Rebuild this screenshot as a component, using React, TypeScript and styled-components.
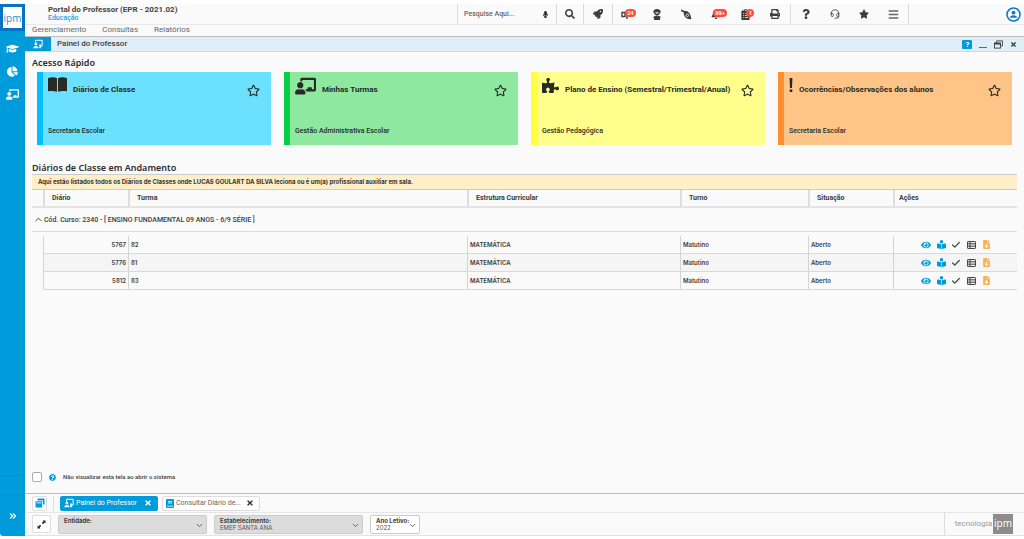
import React from "react";
import styled, { createGlobalStyle } from "styled-components";
import {
  FaBars, FaBell, FaBookReader, FaChalkboardTeacher, FaChartPie, FaClipboardList,
  FaEye, FaFileDownload, FaGraduationCap, FaMicrophone, FaPrint, FaPuzzlePiece,
  FaQuestion, FaQuestionCircle, FaRegStar, FaRocket, FaSearch, FaStar, FaTimes,
} from "react-icons/fa";
import { Check, ChevronDown, ChevronUp, ChevronsRight, Headset } from "lucide-react";

const GlobalStyle = createGlobalStyle`
  * { box-sizing: border-box; }
  body { margin: 0; background: #fff; color: #3c3c3c; font: 500 7px/10px Roboto, sans-serif; }
  button { border: 0; padding: 0; margin: 0; background: none; color: inherit; font: inherit; cursor: pointer; display: flex; align-items: center; justify-content: center; }
  a { color: inherit; text-decoration: none; }
  h1, h2, p { margin: 0; }
  svg { display: block; flex: none; }
`;

const Shell = styled.div`
  display: flex;
  min-height: 100vh;
  padding: 4px 0 3px;
`;
const Sidebar = styled.aside`
  flex: none;
  width: 25px;
  display: flex;
  flex-direction: column;
  background: #009bdb;
  color: #fff;
  border-bottom-left-radius: 3px;
`;
const Logo = styled.a`
  height: 27px;
  display: flex;
  align-items: center;
  justify-content: center;
  border: 3px solid #0873c4;
  background: #fff;
  color: #1a8fd6;
  font: 400 10px/14px "Open Sans", sans-serif;
`;
const SideNav = styled.nav`
  flex: 1;
  display: flex;
  flex-direction: column;
  padding-top: 6px;
`;
const SideButton = styled.button`
  height: 23px;
`;
const SideGap = styled.div`
  height: 20px;
  border-top: 1px solid #0b8fca;
`;
const SideFoot = styled.div`
  height: 41px;
  display: flex;
  justify-content: center;
  border-top: 1px solid #0b8fca;
`;
const Page = styled.div`
  flex: 1;
  min-width: 0;
  display: flex;
  flex-direction: column;
  background: #fafafa;
`;
const TopBar = styled.header`
  display: flex;
  height: 21px;
  border-bottom: 1px solid #e9e9e9;
`;
const Brand = styled.div`
  flex: 1;
  padding: 2px 0 0 23px;
`;
const BrandTitle = styled.h1`
  font: 700 8px/8px Roboto, sans-serif;
  color: #444;
`;
const BrandSub = styled.p`
  font: 500 7px/8px Roboto, sans-serif;
  color: #1a9fe0;
`;
const SearchBox = styled.label`
  display: flex;
  align-items: center;
  width: 99px;
  padding: 0 7px 0 6px;
  border-left: 1px solid #dcdcdc;
`;
const SearchInput = styled.input`
  flex: 1;
  min-width: 0;
  border: 0;
  padding: 0;
  outline: 0;
  background: none;
  font: 500 7px/10px Roboto, sans-serif;
  &::placeholder { color: #666; opacity: 1; }
`;
const ToolGroup = styled.div<{ $width: number }>`
  display: flex;
  width: ${(p) => p.$width}px;
  border-left: 1px solid #dcdcdc;
  color: #3b3f3b;
`;
const Tool = styled.button`
  flex: 1;
`;
const ToolIcon = styled.span`
  position: relative;
  display: block;
`;
const Badge = styled.span<{ $left: number }>`
  position: absolute;
  top: 0;
  left: ${(p) => p.$left}px;
  min-width: 8px;
  height: 8px;
  padding: 0 2px;
  border-radius: 4px;
  background: #f4503c;
  color: #fff;
  font: 700 5px/8px Inter, sans-serif;
`;
const Account = styled.div`
  width: 116px;
  display: flex;
  justify-content: flex-end;
  padding-right: 3px;
  border-left: 1px solid #dcdcdc;
  color: #0e7cc9;
`;
const MenuBar = styled.nav`
  display: flex;
  gap: 16px;
  height: 12px;
  padding: 0 7px;
  border-bottom: 1px solid #bdbdbd;
  color: #666;
  font: 400 8px/10px Roboto, sans-serif;
`;
const TitleBar = styled.div`
  display: flex;
  align-items: center;
  height: 15px;
  padding-right: 7px;
  border-bottom: 1px solid #cfd8dc;
  background: #e0eff7;
`;
const TitleIcon = styled.span`
  align-self: stretch;
  width: 26px;
  display: flex;
  align-items: center;
  justify-content: center;
  background: #009bdb;
  color: #fff;
`;
const Title = styled.span`
  flex: 1;
  padding-left: 6px;
  font: 500 8px/12px Roboto, sans-serif;
`;
const WindowTools = styled.div`
  display: flex;
  align-items: center;
  gap: 7px;
`;
const HelpButton = styled.button`
  width: 10px;
  height: 9px;
  border-radius: 1px;
  background: #009bdb;
  color: #fff;
`;
const Content = styled.main`
  flex: 1;
  padding: 5px 7px 0;
`;
const Heading = styled.h2<{ $top?: number }>`
  margin-top: ${(p) => p.$top ?? 0}px;
  font: 600 9px/12px "Noto Sans", sans-serif;
  color: #2c2c2c;
`;
const Cards = styled.div`
  display: grid;
  grid-template-columns: repeat(4, minmax(0, 1fr));
  gap: 13px;
  padding: 3px 5px 0;
`;
const Card = styled.article<{ $bg: string; $edge: string }>`
  display: flex;
  flex-direction: column;
  justify-content: space-between;
  height: 73px;
  padding: 5px 11px 9px 5px;
  border-left: 6px solid ${(p) => p.$edge};
  background: ${(p) => p.$bg};
  color: #262b26;
`;
const CardHead = styled.div`
  display: flex;
`;
const CardTitle = styled.a`
  flex: 1;
  min-width: 0;
  padding: 7px 0 0 6px;
  white-space: nowrap;
  font: 700 8px/12px Roboto, sans-serif;
`;
const StarButton = styled.button`
  height: 26px;
`;
const Notice = styled.p`
  height: 16px;
  padding: 0 6px;
  border: solid #ccc;
  border-width: 1px 0;
  background: #ffefc8;
  color: #333;
  font: 700 6px/14px Inter, sans-serif;
`;
const Table = styled.table`
  width: 100%;
  table-layout: fixed;
  border-collapse: separate;
  border-spacing: 0;
`;
const Col = styled.col<{ $w?: number }>`
  width: ${(p) => (p.$w ? `${p.$w}px` : "auto")};
`;
const HeadCell = styled.th`
  height: 18px;
  padding: 0 0 0 7px;
  border-bottom: 2px solid #e4e4e4;
  text-align: left;
  font: 700 7px/10px Roboto, sans-serif;
  &:not(:first-child) { border-left: 2px solid #ddd; }
  &:last-child { padding-left: 4px; }
`;
const GroupCell = styled.th`
  height: 24px;
  padding: 0 1px;
  border-bottom: 1px solid #dcdcdc;
  text-align: left;
  font: 500 7px/10px Roboto, sans-serif;
`;
const GroupToggle = styled.button`
  gap: 0;
`;
const SpacerCell = styled.td`
  height: 4px;
  padding: 0;
`;
const IndentCell = styled.td`
  padding: 0;
`;
const Cell = styled.td<{ $right?: boolean }>`
  height: 18px;
  padding: 0 2px;
  border-left: 1px solid #d4d4d4;
  border-bottom: 1px solid #d9d9d9;
  text-align: ${(p) => (p.$right ? "right" : "left")};
  font: 600 6px/10px Inter, sans-serif;
`;
const Row = styled.tr`
  &:nth-child(even) ${Cell} { background: #f5f5f5; }
`;
const Actions = styled.div`
  display: flex;
  gap: 5px;
  padding-left: 25px;
`;
const Action = styled.button<{ $color: string }>`
  width: 10px;
  color: ${(p) => p.$color};
`;
const Optout = styled.label`
  display: flex;
  align-items: center;
  height: 32px;
  padding: 0 7px;
  gap: 7px;
  font: 500 6px/10px Roboto, sans-serif;
`;
const Checkbox = styled.input`
  appearance: none;
  width: 10px;
  height: 10px;
  margin: 0;
  border: 1px solid #aaa;
  border-radius: 2px;
  background: #fff;
  &:checked { background: #009bdb; }
`;
const Tabs = styled.div`
  display: flex;
  align-items: center;
  gap: 4px;
  height: 20px;
  padding: 0 7px;
  border-top: 1px solid #bdbdbd;
  border-bottom: 1px solid #e6e6e6;
`;
const Windows = styled.div`
  width: 22px;
  height: 15px;
  margin-right: 2px;
  border-right: 1px solid #ddd;
`;
const SquareButton = styled.button`
  width: 15px;
  height: 15px;
  border: 1px solid #ddd;
  border-radius: 2px;
  background: #fff;
`;
const Tab = styled.div<{ $active?: boolean }>`
  display: flex;
  align-items: center;
  gap: 2px;
  width: 98px;
  height: 15px;
  padding: 0 5px 0 3px;
  border: 1px solid ${(p) => (p.$active ? "#009bdb" : "#ddd")};
  border-radius: 2px;
  background: ${(p) => (p.$active ? "#009bdb" : "#fff")};
  color: ${(p) => (p.$active ? "#fff" : "#666")};
`;
const TabName = styled.a`
  flex: 1;
  min-width: 0;
  white-space: nowrap;
  font: 400 7px/10px Roboto, sans-serif;
`;
const Footer = styled.footer`
  display: flex;
  gap: 7px;
  height: 23px;
  padding-left: 7px;
  align-items: center;
  border-bottom: 1px solid #e2e2e2;
`;
const ExpandButton = styled(SquareButton)`
  width: 19px;
  height: 18px;
`;
const Field = styled.label<{ $width: number; $white?: boolean }>`
  display: flex;
  align-items: center;
  width: ${(p) => p.$width}px;
  height: 19px;
  padding: 0 2px 0 5px;
  border: 1px solid #ccc;
  border-radius: 2px;
  background: ${(p) => (p.$white ? "#fff" : "#dcdcdc")};
  svg { margin-top: 3px; }
`;
const FieldText = styled.span`
  flex: 1;
  min-width: 0;
  display: flex;
  flex-direction: column;
  font: 700 6px/7px Inter, sans-serif;
  white-space: nowrap;
`;
const Select = styled.select`
  appearance: none;
  width: 100%;
  height: 8px;
  padding: 0;
  border: 0;
  background: none;
  color: #555;
  font: 400 6px/7px Inter, sans-serif;
`;
const Signature = styled.div`
  flex: 1;
  display: flex;
  justify-content: flex-end;
  align-self: stretch;
`;
const SignatureBox = styled.div`
  display: flex;
  align-items: center;
  gap: 1px;
  padding: 0 11px 0 10px;
  border-left: 1px solid #ddd;
  color: #999;
  font: 400 8px/10px Roboto, sans-serif;
`;
const SignatureMark = styled.span`
  width: 20px;
  height: 20px;
  background: #8c8c8c;
  color: #fff;
  text-align: center;
  font: 400 10px/18px "Open Sans", sans-serif;
`;

const OpenBook = () => (
  <svg width="19" height="15" viewBox="0 0 19 15" fill="currentColor">
    <path d="M0 1.2C3 .1 6.300 0 9 1.300V14.800C6.500 13.700 3 13.700 0 14.300ZM10 1.300C12.700 0 16 .1 19 1.200V14.300C16 13.700 12.500 13.700 10 14.800Z" />
  </svg>
);
const Exclamation = () => (
  <svg width="4" height="16" viewBox="0 0 4 16" fill="currentColor">
    <path d="M.6 1H3.400L3 11H1ZM.7 12.500H3.300V15H.7Z" />
  </svg>
);
const PresenterScreen = ({ size = 11 }: { size?: number }) => (
  <svg width={size} height={size} viewBox="0 0 12 12">
    <path d="M3 4V1.500H11V8.500H9" fill="none" stroke="currentColor" strokeWidth="1.200" />
    <circle cx="3.500" cy="6" r="1.700" fill="currentColor" />
    <path d="M.3 11C.3 7.500 6.700 7.500 6.700 11ZM7.500 6.500H9.500V11H7.500Z" fill="currentColor" />
  </svg>
);
const Device = () => (
  <svg width="13" height="11" viewBox="0 0 13 11">
    <path d="M1 3.500H4V7.500H1ZM6 1V10M6 6H12" fill="none" stroke="currentColor" strokeWidth="1.400" />
  </svg>
);
const Agent = () => (
  <svg width="10" height="11" viewBox="0 0 10 11" fill="currentColor">
    <path d="M2 1Q5-.8 8 1L9 3.500H8C8 7.400 2 7.400 2 3.500H1ZM1 8Q5 5.500 9 8L8 9V11H2V9Z" />
    <path d="M3.500 3.300H6.500V4.500H3.500Z" fill="#fafafa" />
  </svg>
);
const Pen = () => (
  <svg width="11" height="11" viewBox="0 0 11 11">
    <path d="M.5 1.500L3 2.500M3.500 3C6 2 9 4.500 9.500 9.500C5.500 9.500 3 7 3.500 3Z" fill="currentColor" stroke="currentColor" strokeWidth="1.600" strokeLinecap="round" strokeLinejoin="round" />
    <circle cx="6.300" cy="6.300" r="1.300" fill="none" stroke="#fafafa" strokeWidth=".8" />
  </svg>
);
const UserRing = () => (
  <svg width="15" height="15" viewBox="0 0 15 15">
    <circle cx="7.500" cy="7.500" r="6.500" fill="none" stroke="currentColor" strokeWidth="1.600" />
    <circle cx="7.500" cy="5.700" r="1.900" fill="currentColor" />
    <path d="M3.800 10.800C4 7.400 11 7.400 11.200 10.800Z" fill="currentColor" />
  </svg>
);
const Restore = () => (
  <svg width="9" height="9" viewBox="0 0 10 10">
    <path d="M3 3V1H9.500V6.500H7.500" fill="none" stroke="currentColor" strokeWidth="1" />
    <rect x=".6" y="3.500" width="6.500" height="5.500" fill="none" stroke="currentColor" strokeWidth="1" />
    <path d="M0 3H7.700V5H0Z" fill="currentColor" />
  </svg>
);
const SolidStacked = () => (
  <svg width="10" height="10" viewBox="0 0 10 10" fill="#009bdb">
    <path d="M2.500.5H9.500V6.500H8V2.500H2.500ZM.5 3.300H7.200V9.500H.5Z" />
    <path d="M1.300 4.500H6.400V5.300H1.300Z" fill="#fff" />
  </svg>
);
const BookIcon = () => (
  <svg width="8" height="9" viewBox="0 0 8 9">
    <rect width="8" height="9" rx="1" fill="#009bdb" />
    <path d="M2 2.500H6M2 4H6M1 7.200H7" stroke="#fff" strokeWidth=".8" />
  </svg>
);
const ListIcon = () => (
  <svg width="9" height="8" viewBox="0 0 9 8">
    <rect x=".5" y=".5" width="8" height="7" rx=".6" fill="#eee" stroke="currentColor" />
    <path d="M1 2.800H8M1 5.200H8M3 1V7" stroke="currentColor" />
  </svg>
);
const Expand = () => (
  <svg width="9" height="9" viewBox="0 0 9 9" fill="#222">
    <path d="M5.500.5H8.500V3.500L7.600 2.600L6 4.200L4.800 3L6.400 1.400ZM.5 5.500V8.500H3.500L2.600 7.600L4.200 6L3 4.800L1.400 6.400Z" />
  </svg>
);

const cards = [
  { title: "Diários de Classe", area: "Secretaria Escolar", bg: "#6be0ff", edge: "#00bfff", icon: <OpenBook /> },
  { title: "Minhas Turmas", area: "Gestão Administrativa Escolar", bg: "#8ee89f", edge: "#04d045", icon: <FaChalkboardTeacher size={21} viewBox="0 40 640 512" height={17} /> },
  { title: "Plano de Ensino (Semestral/Trimestral/Anual)", area: "Gestão Pedagógica", bg: "#ffff8c", edge: "#ffff3c", icon: <FaPuzzlePiece size={17} /> },
  { title: "Ocorrências/Observações dos alunos", area: "Secretaria Escolar", bg: "#ffc588", edge: "#ff8f2c", icon: <Exclamation /> },
];

const classes = [
  { id: "5767", group: "82" },
  { id: "5776", group: "81" },
  { id: "5812", group: "83" },
];

export default function App() {
  return (
    <>
      <GlobalStyle />
      <Shell>
        <Sidebar>
          <Logo href="#">ipm</Logo>
          <SideNav>
            <SideButton aria-label="Ensino"><FaGraduationCap size={13} /></SideButton>
            <SideButton aria-label="Indicadores"><FaChartPie size={11} /></SideButton>
            <SideButton aria-label="Professor"><FaChalkboardTeacher size={13} /></SideButton>
          </SideNav>
          <SideGap />
          <SideFoot>
            <button aria-label="Expandir menu"><ChevronsRight size={10} strokeWidth={3} /></button>
          </SideFoot>
        </Sidebar>
        <Page>
          <TopBar>
            <Brand>
              <BrandTitle>Portal do Professor (EPR - 2021.02)</BrandTitle>
              <BrandSub>Educação</BrandSub>
            </Brand>
            <SearchBox>
              <SearchInput aria-label="Pesquisar" placeholder="Pesquise Aqui..." />
              <FaMicrophone size={7} color="#222" />
            </SearchBox>
            <ToolGroup $width={27}><Tool aria-label="Buscar"><FaSearch size={10} /></Tool></ToolGroup>
            <ToolGroup $width={29}><Tool aria-label="Atalhos"><FaRocket size={10} /></Tool></ToolGroup>
            <ToolGroup $width={178}>
              <Tool aria-label="Dispositivos"><ToolIcon><Device /><Badge $left={4}>24</Badge></ToolIcon></Tool>
              <Tool aria-label="Atendimento"><Agent /></Tool>
              <Tool aria-label="Assinaturas"><Pen /></Tool>
              <Tool aria-label="Notificações"><ToolIcon><FaBell size={10} /><Badge $left={2}>99+</Badge></ToolIcon></Tool>
              <Tool aria-label="Tarefas"><ToolIcon><FaClipboardList size={11} /><Badge $left={6}>1</Badge></ToolIcon></Tool>
              <Tool aria-label="Imprimir"><FaPrint size={10} /></Tool>
            </ToolGroup>
            <ToolGroup $width={118}>
              <Tool aria-label="Ajuda"><FaQuestion size={10} /></Tool>
              <Tool aria-label="Suporte"><Headset size={10} strokeWidth={2} /></Tool>
              <Tool aria-label="Favoritos"><FaStar size={10} /></Tool>
              <Tool aria-label="Menu"><FaBars size={11} color="#666" /></Tool>
            </ToolGroup>
            <Account><button aria-label="Conta"><UserRing /></button></Account>
          </TopBar>
          <MenuBar>
            <a href="#">Gerenciamento</a>
            <a href="#">Consultas</a>
            <a href="#">Relatórios</a>
          </MenuBar>
          <TitleBar>
            <TitleIcon><PresenterScreen size={10} /></TitleIcon>
            <Title>Painel do Professor</Title>
            <WindowTools>
              <HelpButton aria-label="Ajuda da tela"><FaQuestion size={5} /></HelpButton>
              <button aria-label="Minimizar">
                <svg width="8" height="9" viewBox="0 0 8 9"><path d="M0 7.500H8" stroke="#666" /></svg>
              </button>
              <button aria-label="Restaurar"><Restore /></button>
              <button aria-label="Fechar"><FaTimes size={7} /></button>
            </WindowTools>
          </TitleBar>
          <Content>
            <Heading>Acesso Rápido</Heading>
            <Cards>
              {cards.map((c) => (
                <Card key={c.title} $bg={c.bg} $edge={c.edge}>
                  <CardHead>
                    {c.icon}
                    <CardTitle href="#">{c.title}</CardTitle>
                    <StarButton aria-label={`Favoritar ${c.title}`}><FaRegStar size={13} /></StarButton>
                  </CardHead>
                  <p>{c.area}</p>
                </Card>
              ))}
            </Cards>
            <Heading $top={17}>Diários de Classe em Andamento</Heading>
            <Notice>Aqui estão listados todos os Diários de Classes onde LUCAS GOULART DA SILVA leciona ou é um(a) profissional auxiliar em sala.</Notice>
            <Table>
              <colgroup>
                <Col $w={11} /><Col $w={85} /><Col /><Col $w={213} /><Col $w={128} /><Col $w={85} /><Col $w={124} />
              </colgroup>
              <thead>
                <tr>
                  <HeadCell as="td" />
                  {["Diário", "Turma", "Estrutura Curricular", "Turno", "Situação", "Ações"].map((h) => (
                    <HeadCell key={h} scope="col">{h}</HeadCell>
                  ))}
                </tr>
              </thead>
              <tbody>
                <tr>
                  <GroupCell colSpan={7}>
                    <GroupToggle>
                      <ChevronUp size={11} />
                      Cód. Curso: 2340 - [ ENSINO FUNDAMENTAL 09 ANOS - 6/9 SÉRIE ]
                    </GroupToggle>
                  </GroupCell>
                </tr>
                <tr><SpacerCell colSpan={7} /></tr>
              </tbody>
              <tbody>
                {classes.map((c) => (
                  <Row key={c.id}>
                    <IndentCell />
                    <Cell $right>{c.id}</Cell>
                    <Cell>{c.group}</Cell>
                    <Cell>MATEMÁTICA</Cell>
                    <Cell>Matutino</Cell>
                    <Cell>Aberto</Cell>
                    <Cell>
                      <Actions>
                        <Action $color="#009bdb" aria-label="Visualizar"><FaEye size={10} /></Action>
                        <Action $color="#009bdb" aria-label="Diário"><FaBookReader size={9} /></Action>
                        <Action $color="#444" aria-label="Concluir"><Check size={10} strokeWidth={3} /></Action>
                        <Action $color="#444" aria-label="Listar"><ListIcon /></Action>
                        <Action $color="#ffb04d" aria-label="Baixar"><FaFileDownload size={9} /></Action>
                      </Actions>
                    </Cell>
                  </Row>
                ))}
              </tbody>
            </Table>
          </Content>
          <Optout>
            <Checkbox type="checkbox" />
            <FaQuestionCircle size={7} color="#009bdb" />
            Não visualizar esta tela ao abrir o sistema
          </Optout>
          <Tabs>
            <Windows><SquareButton aria-label="Janelas"><SolidStacked /></SquareButton></Windows>
            <Tab $active>
              <PresenterScreen size={10} />
              <TabName href="#">Painel do Professor</TabName>
              <button aria-label="Fechar Painel do Professor"><FaTimes size={8} /></button>
            </Tab>
            <Tab>
              <BookIcon />
              <TabName href="#">Consultar Diário de...</TabName>
              <button aria-label="Fechar Consultar Diário"><FaTimes size={8} color="#333" /></button>
            </Tab>
          </Tabs>
          <Footer>
            <ExpandButton aria-label="Tela cheia"><Expand /></ExpandButton>
            <Field $width={149}>
              <FieldText>Entidade:<Select><option aria-label="Nenhuma"></option></Select></FieldText>
              <ChevronDown size={9} />
            </Field>
            <Field $width={149}>
              <FieldText>Estabelecimento:<Select><option>EMEF SANTA ANA</option></Select></FieldText>
              <ChevronDown size={9} />
            </Field>
            <Field $width={50} $white>
              <FieldText>Ano Letivo:<Select><option>2022</option></Select></FieldText>
              <ChevronDown size={9} />
            </Field>
            <Signature>
              <SignatureBox>tecnologia<SignatureMark>ipm</SignatureMark></SignatureBox>
            </Signature>
          </Footer>
        </Page>
      </Shell>
    </>
  );
}
